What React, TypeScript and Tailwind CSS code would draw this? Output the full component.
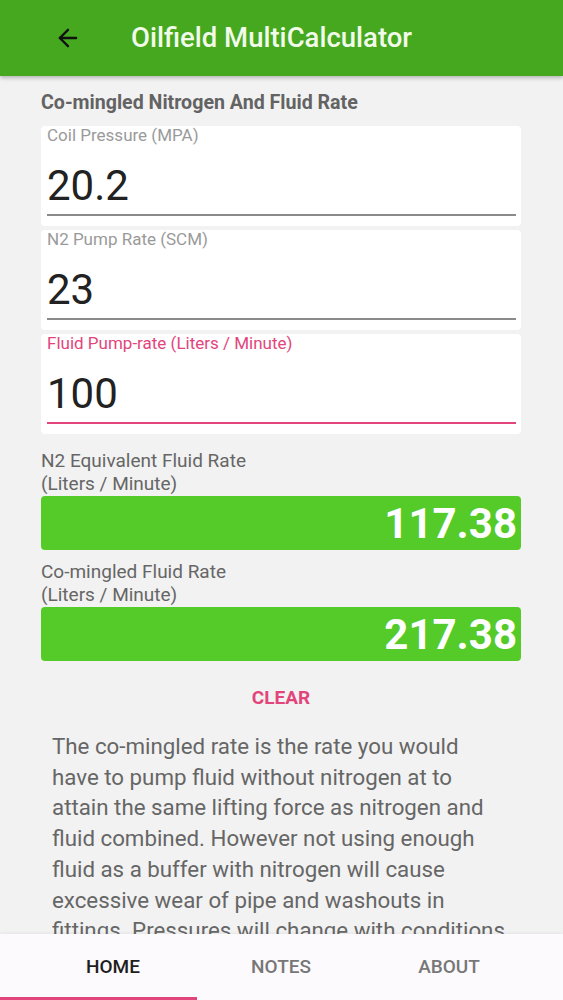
import { ArrowLeft } from "lucide-react";

type Field = {
  label: string;
  value: string;
  active?: boolean;
};

const fields: Array<Field> = [
  { label: "Coil Pressure (MPA)", value: "20.2" },
  { label: "N2 Pump Rate (SCM)", value: "23" },
  { label: "Fluid Pump-rate (Liters / Minute)", value: "100", active: true },
];

const results = [
  { label: "N2 Equivalent Fluid Rate", unit: "(Liters / Minute)", value: "117.38" },
  { label: "Co-mingled Fluid Rate", unit: "(Liters / Minute)", value: "217.38" },
];

const noteLines = [
  "The co-mingled rate is the rate you would",
  "have to pump fluid without nitrogen at to",
  "attain the same lifting force as nitrogen and",
  "fluid combined. However not using enough",
  "fluid as a buffer with nitrogen will cause",
  "excessive wear of pipe and washouts in",
  "fittings. Pressures will change with conditions",
  "and depth.",
];

const InputCard: React.FC<{ field: Field }> = ({ field }) => (
  <div className="h-[100px] rounded-[4px] bg-white pl-[6px] pr-[5px]">
    <div
      className={`text-[17px] leading-[18px] ${
        field.active ? "text-[#e2457c]" : "text-[#9a9a9a]"
      }`}
    >
      {field.label}
    </div>
    <div className="mt-[18px] text-[42px] leading-[48px] text-[#222222]">
      {field.value}
    </div>
    <div
      className={`mt-[4px] h-[2px] ${
        field.active ? "bg-[#e2457c]" : "bg-[#8a8a8a]"
      }`}
    />
  </div>
);

export default function App() {
  return (
    <div
      className="flex h-[1000px] w-[563px] flex-col overflow-hidden bg-[#f2f2f2]"
      style={{ fontFamily: "Roboto, 'Noto Sans', sans-serif" }}
    >
      <div className="z-10 flex h-[76px] shrink-0 items-center bg-[#45a81f] shadow-[0_2px_4px_rgba(0,0,0,0.25)]">
        <ArrowLeft className="ml-[54px] h-[28px] w-[28px] text-[#111111]" strokeWidth={2} />
        <div className="ml-[49px] text-[27.5px] font-medium text-[#f2fbe9]">
          Oilfield MultiCalculator
        </div>
      </div>

      <div className="flex-1 overflow-hidden">
        <div className="pl-[41px] pr-[42px]">
          <div className="mt-[16px] text-[19.6px] font-bold leading-[22px] text-[#636363]">
            Co-mingled Nitrogen And Fluid Rate
          </div>
          <div className="mt-[12px] flex flex-col gap-[4px]">
            {fields.map((f) => (
              <InputCard key={f.label} field={f} />
            ))}
          </div>

          <div className="mt-[15px] flex flex-col gap-[10px]">
            {results.map((r) => (
              <div key={r.label}>
                <div className="text-[19px] leading-[23px] text-[#666666]">
                  <div>{r.label}</div>
                  <div>{r.unit}</div>
                </div>
                <div className="mt-[1px] flex h-[54px] items-center justify-end rounded-[4px] bg-[#55cb2a] pr-[4px] text-[42px] font-bold text-white">
                  {r.value}
                </div>
              </div>
            ))}
          </div>

          <div className="mt-[26px] text-center text-[19px] font-bold leading-[22px] text-[#e2457c]">
            CLEAR
          </div>
        </div>

        <p className="mt-[22px] pl-[52px] text-[22.3px] leading-[30.7px] text-[#666666]">
          {noteLines.map((line) => (
            <span key={line} className="block whitespace-nowrap">
              {line}
            </span>
          ))}
        </p>
      </div>

      <div className="relative flex h-[66px] shrink-0 bg-[#fcfafc] shadow-[0_-1px_3px_rgba(0,0,0,0.06)]">
        <div className="flex w-[197px] items-center justify-center pl-[29px] text-[19px] font-medium text-[#1e1e1e]">
          HOME
        </div>
        <div className="flex w-[168px] items-center justify-center text-[19px] font-medium text-[#777777]">
          NOTES
        </div>
        <div className="flex w-[168px] items-center justify-center text-[19px] font-medium text-[#777777]">
          ABOUT
        </div>
        <div className="absolute bottom-0 left-0 h-[3px] w-[197px] bg-[#e2457c]" />
      </div>
    </div>
  );
}
